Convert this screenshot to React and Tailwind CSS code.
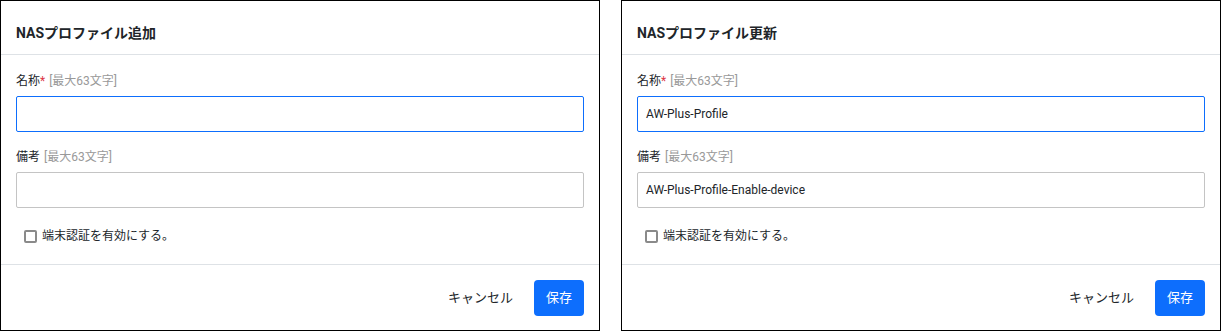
import React from "react";

const font = { fontFamily: 'Roboto, "Noto Sans CJK JP", sans-serif' };

function Panel({ title, name, note, focused }) {
  return (
    <div className="w-[600px] h-[331px] border border-black bg-white flex flex-col shrink-0">
      <div className="h-[54px] border-b border-[#dee2e6] px-[15px] pt-[22px]">
        <div className="text-[14px] leading-[20px] font-bold text-[#212529]">{title}</div>
      </div>
      <div className="px-[15px] pt-[17px] flex-1">
        <div className="text-[12px] leading-[18px] text-[#212529] mb-[6px]">
          名称<span className="text-[#dc3545]">*</span>
          <span className="text-[#999] ml-[4px]">[最大63文字]</span>
        </div>
        <div className="h-[36px] rounded-[2px] border border-[#0d6efd] px-[8px] flex items-center text-[12px] text-[#212529]">
          {name}
        </div>
        <div className="mt-[16px] text-[12px] leading-[18px] text-[#212529] mb-[6px]">
          備考<span className="text-[#999] ml-[4px]">[最大63文字]</span>
        </div>
        <div className="h-[36px] rounded-[2px] border border-[#c4c4c4] px-[8px] flex items-center text-[12px] text-[#212529]">
          {note}
        </div>
        <div className="mt-[19px] ml-[8px] flex items-center h-[18px] text-[12px] text-[#212529]">
          <span className="w-[13px] h-[13px] border-2 border-[#8a8a8a] rounded-[2px] mr-[5px] box-border"></span>
          端末認証を有効にする。
        </div>
      </div>
      <div className="h-[66px] border-t border-[#dee2e6] px-[15px] flex items-center justify-end">
        <span className="text-[13px] text-[#212529] mr-[21px]">キャンセル</span>
        <button className="w-[50px] h-[36px] rounded-[4px] bg-[#0d6efd] text-white text-[13px]">保存</button>
      </div>
    </div>
  );
}

export default function App() {
  return (
    <div className="w-[1221px] h-[332px] bg-white flex gap-[21px]" style={font}>
      <Panel title="NASプロファイル追加" name="" note="" />
      <Panel title="NASプロファイル更新" name="AW-Plus-Profile" note="AW-Plus-Profile-Enable-device" />
    </div>
  );
}
